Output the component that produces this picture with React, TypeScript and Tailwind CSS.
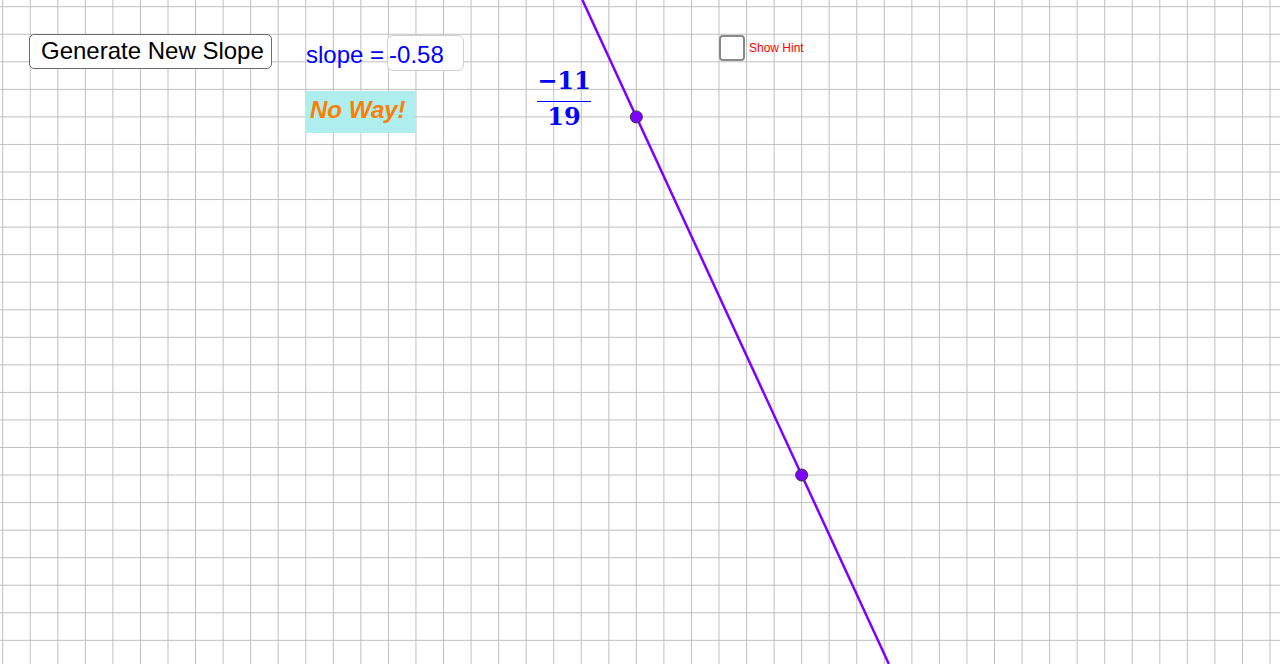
const STEP = 27.55;
const X0 = 2.7;
const Y0 = 6.7;

const cols = Array.from({ length: 47 }, (_, i) => X0 + STEP * i);
const rows = Array.from({ length: 25 }, (_, j) => Y0 + STEP * j);

// the two points on the line, in screen pixels
const p1 = { x: X0 + STEP * 23, y: Y0 + STEP * 4 };
const p2 = { x: X0 + STEP * 29, y: Y0 + STEP * 17 };
const k = (p2.x - p1.x) / (p2.y - p1.y);

function GridCanvas() {
  return (
    <svg className="absolute inset-0" width={1280} height={664}>
      {cols.map((x) => (
        <line key={"v" + x} x1={x} y1={0} x2={x} y2={664} stroke="#c0c0c0" strokeWidth={1} />
      ))}
      {rows.map((y) => (
        <line key={"h" + y} x1={0} y1={y} x2={1280} y2={y} stroke="#c0c0c0" strokeWidth={1} />
      ))}
      <line
        x1={p1.x - p1.y * k}
        y1={0}
        x2={p1.x + (664 - p1.y) * k}
        y2={664}
        stroke="#7f00ff"
        strokeWidth={2.5}
      />
      {[p1, p2].map((p) => (
        <circle key={p.x} cx={p.x} cy={p.y} r={6} fill="#7f00ff" stroke="#333" strokeWidth={1} />
      ))}
    </svg>
  );
}

export default function App() {
  return (
    <div className="relative h-[664px] w-[1280px] overflow-hidden bg-white font-['Liberation_Sans',Arial,sans-serif]">
      <GridCanvas />

      <button className="absolute left-[29px] top-[34px] flex h-[35px] w-[243px] items-center rounded-[5px] border-[1.5px] border-[#6b6b6b] bg-white pb-[1px] pl-[11px] text-[24px] leading-[24px] text-black">
        Generate New Slope
      </button>

      <div className="absolute left-[306px] top-[35px] flex items-center gap-[3px] text-[24px] leading-[24px] text-[#0000ff]">
        <span className="pt-[4px]">slope =</span>
        <div className="flex h-[36px] w-[77px] items-center rounded-[6px] border border-[#d0d0d0] bg-white pl-[1px] pt-[4px]">
          -0.58
        </div>
      </div>

      <div className="absolute left-[305px] top-[91px] h-[42px] w-[110px] bg-[#afeeee] pl-[5px] pt-[7px] text-[24px] font-bold italic leading-[24px] text-[#ff7f00]">
        No Way!
      </div>

      <div className="absolute left-[537px] top-[69px] flex w-[54px] flex-col items-center font-['DejaVu_Serif',serif] text-[24px] font-bold leading-[24px] text-[#0000ff]">
        <span>−11</span>
        <span className="mt-[8px] h-px w-full bg-[#0000ff]" />
        <span className="mt-[3px]">19</span>
      </div>

      <label className="absolute left-[719px] top-[35px] flex items-center gap-[4px] text-[12px] leading-[12px] text-[#ff0000]">
        <span className="h-[26px] w-[26px] rounded-[4px] border-2 border-[#8a8a8a] bg-white" />
        <span className="pb-[1px]">Show Hint</span>
      </label>
    </div>
  );
}
